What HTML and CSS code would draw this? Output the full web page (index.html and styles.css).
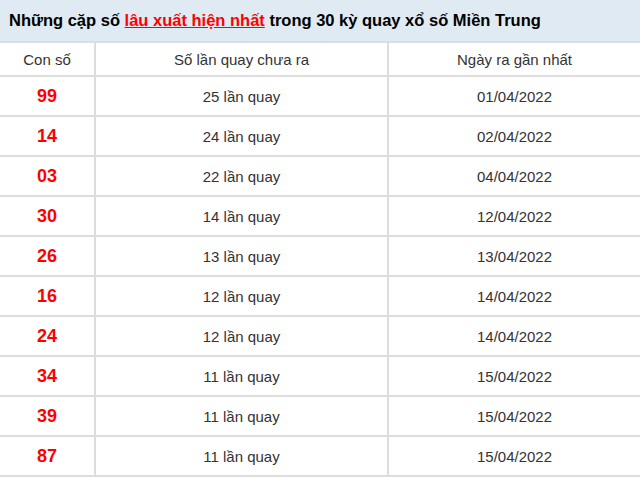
FILE: index.html
```html
<!DOCTYPE html>
<html lang="vi">
<head>
<meta charset="utf-8">
<link rel="stylesheet" href="styles.css">
</head>
<body>
<div class="box">
  <h3 class="title">Những cặp số&nbsp;<a class="hl" href="#">lâu xuất hiện nhất</a>&nbsp;trong 30 kỳ quay xổ số Miền Trung</h3>
  <table class="tbl">
    <thead>
      <tr><th class="c1">Con số</th><th class="c2">Số lần quay chưa ra</th><th class="c3">Ngày ra gần nhất</th></tr>
    </thead>
    <tbody>
      <tr><td class="num">99</td><td>25 lần quay</td><td>01/04/2022</td></tr>
      <tr><td class="num">14</td><td>24 lần quay</td><td>02/04/2022</td></tr>
      <tr><td class="num">03</td><td>22 lần quay</td><td>04/04/2022</td></tr>
      <tr><td class="num">30</td><td>14 lần quay</td><td>12/04/2022</td></tr>
      <tr><td class="num">26</td><td>13 lần quay</td><td>13/04/2022</td></tr>
      <tr><td class="num">16</td><td>12 lần quay</td><td>14/04/2022</td></tr>
      <tr><td class="num">24</td><td>12 lần quay</td><td>14/04/2022</td></tr>
      <tr><td class="num">34</td><td>11 lần quay</td><td>15/04/2022</td></tr>
      <tr><td class="num">39</td><td>11 lần quay</td><td>15/04/2022</td></tr>
      <tr><td class="num">87</td><td>11 lần quay</td><td>15/04/2022</td></tr>
    </tbody>
  </table>
</div>
</body>
</html>
```
FILE: styles.css
```css
html, body {
  margin: 0;
  padding: 0;
  background: #fff;
}
body {
  font-family: "Liberation Sans", Arial, sans-serif;
  color: #333;
}
.box {
  width: 640px;
}
.title {
  margin: 0;
  height: 41px;
  box-sizing: border-box;
  padding: 0 9px;
  display: flex;
  align-items: center;
  background: #e0eaf2;
  font-size: 16.5px;
  font-weight: bold;
  color: #000;
  white-space: nowrap;
}
.hl {
  color: #f00;
  text-decoration: underline;
}
.tbl {
  width: 640px;
  border-collapse: collapse;
  table-layout: fixed;
}
.tbl th, .tbl td {
  border-top: 2px solid #ddd;
  border-bottom: 2px solid #ddd;
  border-left: 2px solid #ddd;
  text-align: center;
  padding: 0;
  font-size: 15px;
  font-weight: normal;
  color: #333;
}
.tbl th:first-child, .tbl td:first-child {
  border-left: none;
}
.tbl th {
  height: 32px;
}
.tbl td {
  height: 38px;
}
.c1 { width: 94px; }
.c2 { width: 291px; }
.tbl td.num {
  color: #f00;
  font-weight: bold;
  font-size: 18px;
}
```
